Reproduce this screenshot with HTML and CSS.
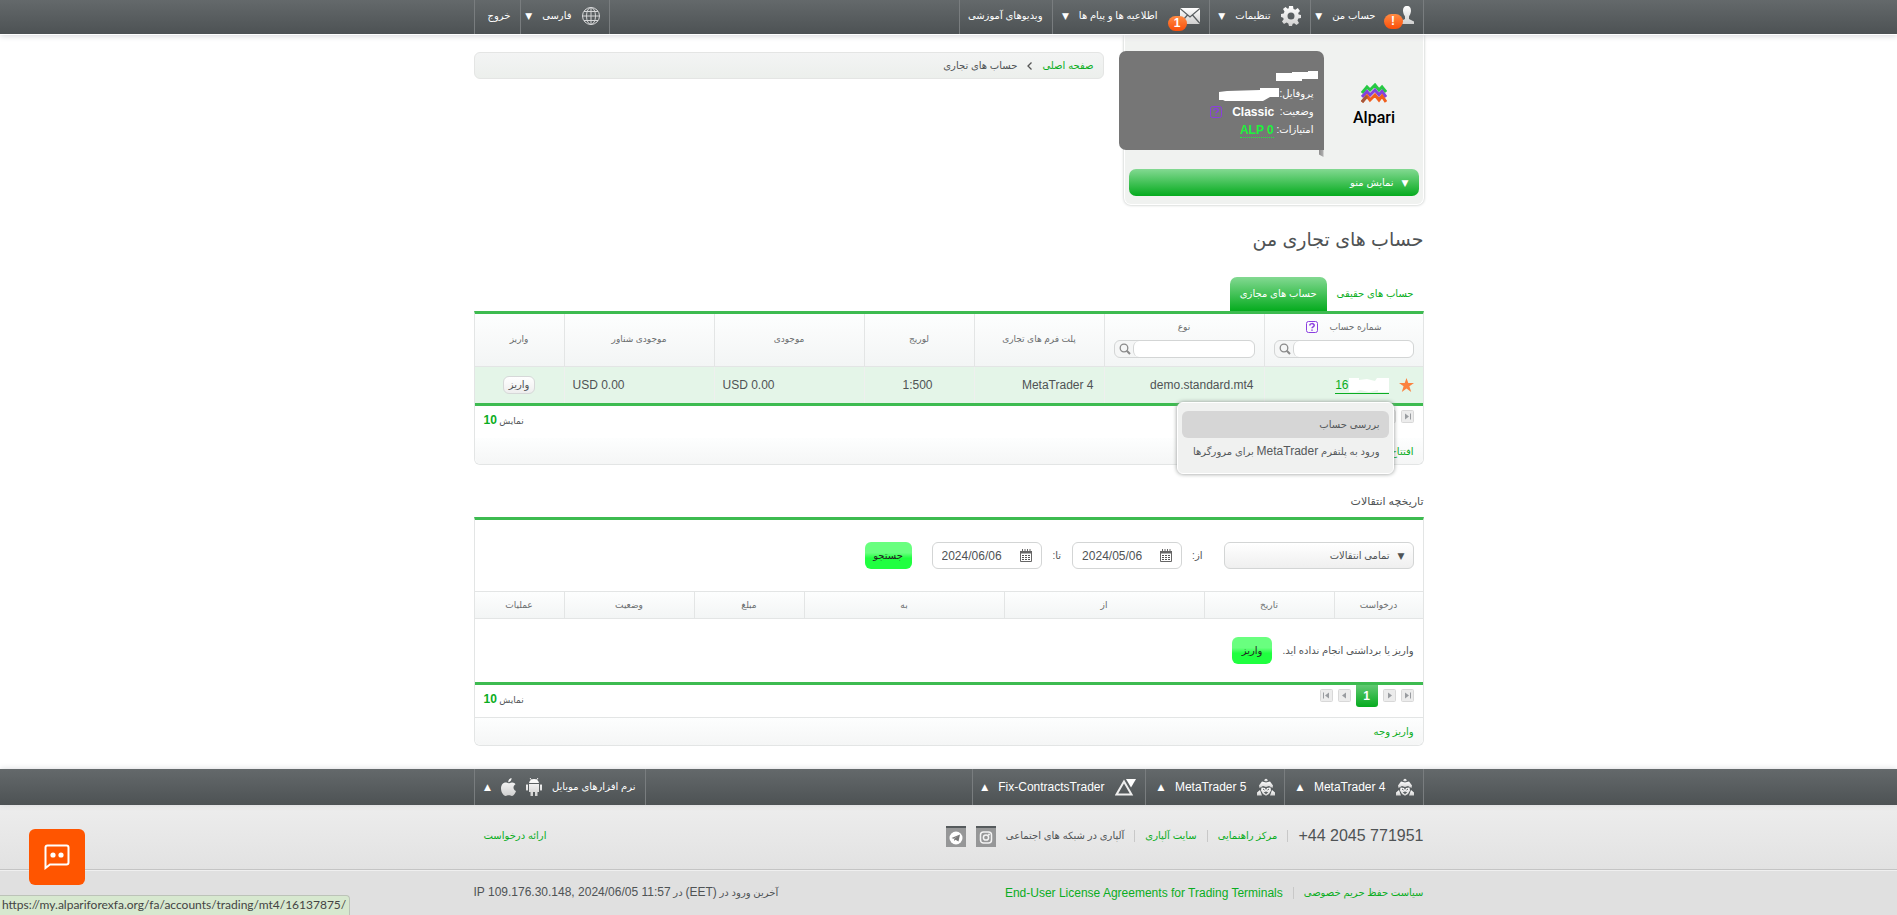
FILE: index.html
```html
<!DOCTYPE html>
<html lang="fa" dir="rtl">
<head>
<meta charset="utf-8">
<title>حساب های تجاری من</title>
<link rel="stylesheet" href="styles.css">
</head>
<body>
<svg class="defs" width="0" height="0" aria-hidden="true">
  <defs>
    <linearGradient id="silver" x1="0" y1="0" x2="0" y2="1"><stop offset="0" stop-color="#fff"/><stop offset="1" stop-color="#cfcfcf"/></linearGradient>
    <symbol id="help" viewBox="0 0 12 12"><rect x=".5" y=".5" width="11" height="11" rx="2" fill="none" stroke="#8a3ee0"/><path d="M3.8 4.6C3.8 2 8.2 2 8.2 4.4 8.2 5.8 6 5.8 6 7.2M6 8.4V9.8" fill="none" stroke="#8a3ee0" stroke-width="1.5"/></symbol>
    <symbol id="lens" viewBox="0 0 12 12"><circle cx="5" cy="5" r="3.8" fill="none" stroke="#8a8a8a" stroke-width="1.3"/><path d="M7.8 7.8 11 11" stroke="#8a8a8a" stroke-width="2"/></symbol>
    <symbol id="calendar" viewBox="0 0 12 13"><path d="M.5 3.500H11.500V12.500H.5z" fill="#fff" stroke="#666"/><path d="M0 2h12v2.500H0z" fill="#666"/><path d="M2.500 0v3M5 0v3M7.500 0v3M10 0v3" stroke="#666"/><path d="M2 6h2v1H2zM5 6h2v1H5zM8 6h2v1H8zM2 8h2v1H2zM5 8h2v1H5zM8 8h2v1H8zM2 10h2v1H2zM5 10h2v1H5zM8 10h2v1H8z" fill="#555"/></symbol>
    <symbol id="mt" viewBox="0 0 18 18"><g fill="url(#silver)"><path d="M7 2.500Q9-1 11 2.500L9 3.500z"/><path d="M5 3.500 9 4.500 13 3.500 16 7.500 15.500 10 12 8 9 9 6 8 2.500 10 2 7.500z"/><path d="M4.500 9.500 8 10 9 12 10 10 13.500 9.500 14 12.500 12 16 9 17.800 6 16 4 12.500z"/><path d="M3 12 0 14.500V17.500H5zM15 12 18 14.500V17.500H13z"/></g><path d="M6 11 7.500 12M12 11 10.500 12M7.500 14.500 9 14 10.500 14.500 9 15.500z" stroke="#5a5f61" fill="#5a5f61"/></symbol>
    <symbol id="pg-end" viewBox="0 0 13 13"><rect x=".5" y=".5" width="12" height="12" rx="1" fill="#ececec" stroke="#d8d8d8"/><path d="M4 3.500 8 6.500 4 9.500z" fill="#999ca0"/><path d="M9.500 3.500v6" stroke="#999ca0"/></symbol>
    <symbol id="pg-step" viewBox="0 0 13 13"><rect x=".5" y=".5" width="12" height="12" rx="1" fill="#ececec" stroke="#d8d8d8"/><path d="M5 3.500 9 6.500 5 9.500z" fill="#999ca0"/></symbol>
  </defs>
</svg>

<header class="bar">
  <nav class="wrap bar-row">
    <ul class="menu">
      <li class="w-113"><span class="icon-badge"><svg width="14" height="19" viewBox="0 0 14 19"><path d="M7 0C10 0 11 2 11 5 10.700 7.500 10 9 9 10.500V13L14 15.500V18H0V15.500L5 13V10.500C4 9 3.300 7.500 3 5 3 2 4 0 7 0z" fill="url(#silver)"/></svg><b class="count">!</b></span><a href="#">حساب من</a><i>▼</i></li>
      <li class="w-101"><svg width="20" height="20" viewBox="0 0 20 20"><g fill="url(#silver)"><path fill-rule="evenodd" d="M8 0h4l.5 3 1.800.8L16.800 2 19 5l-1.800 2 .4 1.500 2.400.5v3l-2.700.6-.8 1.900L18 17l-2.500 2-2.300-1.700-1.500.5L11 20H8l-.7-2.600-1.700-.8L3 18 1 15.500l1.700-2.300-.5-1.500L0 11V8l2.700-.6.8-1.800L2 3l2.500-2 2.200 1.700 1.100-.4zM10 6.500a3.500 3.500 0 1 0 0 7 3.500 3.500 0 0 0 0-7z"/></g></svg><a href="#">تنظیمات</a><i>▼</i></li>
      <li class="w-157"><span class="icon-badge"><svg width="20" height="16" viewBox="0 0 20 16"><path d="M0 0h20v16H0z" fill="url(#silver)"/><path d="M0 .5 10 9 20 .5M0 15.500 7.500 7M20 15.500 12.500 7" fill="none" stroke="#5a5f61" stroke-width="1.300"/></svg><b class="count">1</b></span><a href="#">اطلاعیه ها و پیام ها</a><i>▼</i></li>
      <li class="w-93"><a href="#">ویدیوهای آموزشی</a></li>
    </ul>
    <ul class="menu">
      <li class="w-89"><svg width="18" height="18" viewBox="0 0 18 18"><g fill="none" stroke="#d5d6d7"><circle cx="9" cy="9" r="8.500"/><ellipse cx="9" cy="9" rx="4.500" ry="8.500"/><path d="M9 0v18M0 9h18M2 4.500h14M2 13.500h14"/></g></svg><a href="#">فارسی</a><i>▼</i></li>
      <li class="w-46"><a href="#">خروج</a></li>
    </ul>
  </nav>
</header>

<main class="wrap">
  <div class="top">
    <aside class="side">
      <div class="side-head">
        <a class="logo" href="#"><svg width="26" height="22" viewBox="0 0 26 22"><g fill="none" stroke-width="3"><path d="M1 10 6 4 9 7 14 2 18 7 21 4 25 9" stroke="#26c943"/><path d="M1 14 6 8.500 9 12 14 7 18 12 21 8.500 25 14" stroke="#8343dc"/><path d="M1 19 6 13 9 17 14 12 18 17 21 13 25 19" stroke="#f05f1d"/><path d="M1 19 6 13" stroke="#a3583d"/></g></svg><span>Alpari</span></a>
        <div class="profile">
          <svg class="name-mask" width="42" height="10" viewBox="0 0 42 10"><path d="M0 2H16V1H32V0H42V8H26V10H0z" fill="#fff"/></svg>
          <div class="prow">پروفایل:<svg width="60" height="13" viewBox="0 0 60 13"><path d="M0 4 8 3 41 2V0H60V9H51L44 13H6L4 12H0z" fill="#fff"/></svg></div>
          <div class="prow">وضعیت:  <b class="status">Classic</b><svg class="phelp" width="12" height="12"><use href="#help"/></svg></div>
          <div class="prow">امتیازات: <a class="points" href="#" dir="ltr">ALP 0</a></div>
          <span class="tail"></span>
        </div>
      </div>
      <button class="menu-toggle" type="button"><i>▼</i><span>نمایش منو</span></button>
    </aside>
    <nav class="crumbs"><a href="#">صفحه اصلی</a><svg width="5" height="8" viewBox="0 0 5 8"><path d="M.5.5 4 4 .5 7.500" fill="none" stroke="#555" stroke-width="1.300"/></svg><span>حساب های تجاری</span></nav>
  </div>

  <h1>حساب های تجاری من</h1>
  <div class="tabs"><a href="#">حساب های حقیقی</a><a class="active" href="#">حساب های مجازی</a></div>

  <section class="card">
    <table class="grid accounts">
      <colgroup><col class="c159"><col class="c160"><col class="c130"><col class="c110"><col class="c150"><col class="c150"><col></colgroup>
      <thead><tr>
        <th><label class="th-label" for="f-acc">شماره حساب <svg width="12" height="12"><use href="#help"/></svg></label><span class="search"><input id="f-acc" type="text"><svg width="12" height="12"><use href="#lens"/></svg></span></th>
        <th><label class="th-label" for="f-type">نوع</label><span class="search"><input id="f-type" type="text"><svg width="12" height="12"><use href="#lens"/></svg></span></th>
        <th>پلت فرم های تجاری</th><th>لوریج</th><th>موجودی</th><th>موجودی شناور</th><th>واریز</th>
      </tr></thead>
      <tbody><tr>
        <td><div class="acc"><svg width="15" height="14" viewBox="0 0 15 14"><path d="M7.500 0 9.300 5H15L10.400 8.300 12.200 14 7.500 10.500 2.800 14 4.600 8.300 0 5H5.700z" fill="#fb8240"/></svg><a href="#" dir="ltr">16<svg width="40" height="14" viewBox="0 0 40 14"><path d="M0 0H10V2L18 1 26 3 28 0H40V14H29V12L20 14 11 12 7 14H0z" fill="#fff"/></svg></a></div>
          <div class="popup"><a class="on" href="#">بررسی حساب</a><a href="#">ورود به پلتفرم <bdi>MetaTrader</bdi> برای مرورگرها</a></div></td>
        <td dir="ltr" class="r">demo.standard.mt4</td><td dir="ltr" class="r">MetaTrader 4</td><td dir="ltr" class="r lev">1:500</td><td dir="ltr">USD 0.00</td><td dir="ltr">USD 0.00</td><td class="mid"><button class="mini" type="button">واریز</button></td>
      </tr></tbody>
    </table>
    <div class="pager">
      <div class="pages"><button type="button" aria-label="آخر"><svg width="13" height="13"><use href="#pg-end"/></svg></button><button type="button" aria-label="بعد"><svg width="13" height="13"><use href="#pg-step"/></svg></button></div>
      <span>نمایش <b>10</b></span>
    </div>
    <div class="card-foot plain"><a href="#">افتتاح</a></div>
  </section>

  <h2>تاریخچه انتقالات</h2>
  <section class="card">
    <form class="filter">
      <span class="select"><i>▼</i><select aria-label="انتقالات"><option>تمامی انتقالات</option></select></span>
      <label class="from" for="d1">از:</label>
      <span class="date"><svg width="12" height="13"><use href="#calendar"/></svg><input id="d1" type="text" dir="ltr" value="2024/05/06"></span>
      <label class="to" for="d2">تا:</label>
      <span class="date"><svg width="12" height="13"><use href="#calendar"/></svg><input id="d2" type="text" dir="ltr" value="2024/06/06"></span>
      <button class="btn find" type="button">جستجو</button>
    </form>
    <table class="grid history">
      <colgroup><col class="c89"><col class="c130"><col class="c200"><col class="c200"><col class="c110"><col class="c130"><col></colgroup>
      <thead><tr><th>درخواست</th><th>تاریخ</th><th>از</th><th>به</th><th>مبلغ</th><th>وضعیت</th><th>عملیات</th></tr></thead>
      <tbody><tr><td colspan="7"><div class="empty"><span>واریز یا برداشتی انجام نداده اید.</span><button class="btn" type="button">واریز</button></div></td></tr></tbody>
    </table>
    <div class="pager">
      <div class="pages"><button type="button" aria-label="آخر"><svg width="13" height="13"><use href="#pg-end"/></svg></button><button type="button" aria-label="بعد"><svg width="13" height="13"><use href="#pg-step"/></svg></button><b class="cur">1</b><button class="flip" type="button" aria-label="قبل"><svg width="13" height="13"><use href="#pg-step"/></svg></button><button class="flip" type="button" aria-label="اول"><svg width="13" height="13"><use href="#pg-end"/></svg></button></div>
      <span>نمایش <b>10</b></span>
    </div>
    <div class="card-foot"><a href="#">واریز وجه</a></div>
  </section>
</main>

<footer>
  <div class="bar low">
    <nav class="wrap bar-row">
      <ul class="menu">
        <li class="w-139"><svg width="18" height="18"><use href="#mt"/></svg><a href="#" dir="ltr">MetaTrader 4</a><i>▲</i></li>
        <li class="w-139"><svg width="18" height="18"><use href="#mt"/></svg><a href="#" dir="ltr">MetaTrader 5</a><i>▲</i></li>
        <li class="w-173"><svg width="21" height="17" viewBox="0 0 21 17"><path d="M9 2.500 16.500 15.500H1.500z" fill="none" stroke="#eee" stroke-width="2"/><path d="M11 0H21L16 8.500z" fill="#fff"/></svg><a href="#" dir="ltr">Fix-ContractsTrader</a><i>▲</i></li>
      </ul>
      <ul class="menu">
        <li class="w-171"><a class="mobile" href="#">نرم افزارهای موبایل</a><svg width="16" height="18" viewBox="0 0 16 18"><g fill="url(#silver)"><path d="M3 5C3.500 2.500 5.500 1 8 1S12.500 2.500 13 5zM3 6H13V14H11.500V18H9V14H7V18H4.500V14H3zM0 7Q1 5.500 2 7V12Q1 13.500 0 12zM14 7Q15 5.500 16 7V12Q15 13.500 14 12z"/></g><path d="M4 0 5.500 2M12 0 10.500 2" stroke="#eee"/></svg><svg width="15" height="18" viewBox="0 0 15 18"><path d="M10.500 0C10.800 2 9.300 4.200 7.300 4.200 7 2.300 8.700.3 10.500 0zM7.500 5.200C8.500 5.200 9.500 4.300 11.200 4.400 12.800 4.500 13.800 5.200 14.500 6.200 11.500 8 12 11.800 15 13 14.300 15.300 12.700 18 11 18 9.700 18 9.200 17.300 7.800 17.300 6.300 17.300 5.800 18 4.600 18 2.500 18 0 14 0 10.500 0 6.500 2.500 4.500 4.500 4.500 5.800 4.500 6.700 5.200 7.500 5.200z" fill="url(#silver)"/></svg><i>▲</i></li>
      </ul>
    </nav>
  </div>
  <div class="links">
    <div class="wrap links-row">
      <span class="phone" dir="ltr">+44 2045 771951</span><a class="sep" href="#">مرکز راهنمایی</a><a class="sep" href="#">سایت آلپاری</a><span class="sep">آلپاری در شبکه های اجتماعی</span>
      <a class="soc" href="#" aria-label="Instagram"><svg width="20" height="21" viewBox="0 0 20 21"><path d="M0 0H20V21H0z" fill="#969798"/><path d="M0 0H20V2H0z" fill="#555a5c"/><g fill="none" stroke="#f4f4f4" stroke-width="1.500"><rect x="4.500" y="6" width="11" height="11" rx="3"/><circle cx="10" cy="11.500" r="2.600"/></g><circle cx="13" cy="8.500" r=".9" fill="#fff"/></svg></a>
      <a class="soc" href="#" aria-label="Telegram"><svg width="20" height="21" viewBox="0 0 20 21"><path d="M0 0H20V21H0z" fill="#969798"/><path d="M0 0H20V2H0z" fill="#555a5c"/><circle cx="10" cy="12" r="6.500" fill="#fff"/><path d="M5.500 12 14 8.500 12.500 15.500 9.500 13.800 8.200 15V12.800L12.500 9.800 7.500 12.700z" fill="#777"/></svg></a>
      <a class="req" href="#">ارائه درخواست</a>
    </div>
  </div>
  <div class="legal">
    <div class="wrap legal-row">
      <a href="#">سیاست حفظ حریم خصوصی</a><a class="sep eula" href="#" dir="ltr">End-User License Agreements for Trading Terminals</a>
      <span class="ip">آخرین ورود در <bdi>(EET)</bdi> در <bdi dir="ltr">IP 109.176.30.148, 2024/06/05 11:57</bdi></span>
    </div>
  </div>
</footer>

<button class="chat" type="button" aria-label="گفتگو"><svg width="26" height="26" viewBox="0 0 26 26"><path d="M3.500 1.500H22.500Q24.500 1.500 24.500 3.500V18.500Q24.500 20.500 22.500 20.500H6L1.500 24V3.500Q1.500 1.500 3.500 1.500z" fill="none" stroke="#fff" stroke-width="2"/><circle cx="9" cy="11" r="2.600" fill="#fff"/><circle cx="17" cy="11" r="2.600" fill="#fff"/></svg></button>
<div class="status-url" dir="ltr">https://my.alpariforexfa.org/fa/accounts/trading/mt4/16137875/</div>
</body>
</html>
```
FILE: styles.css
```css
* { box-sizing: border-box; }
body {
  margin: 0;
  min-height: 100vh;
  display: flex;
  flex-direction: column;
  background: #fff;
  color: #4f5355;
  font: 10px/16px "Liberation Sans", "DejaVu Sans", sans-serif;
}
a { color: #0aad22; text-decoration: none; }
button, input, select { font: inherit; color: inherit; }
button { cursor: pointer; }
bdi { font-size: 12px; }
svg { display: block; flex: none; }
.defs { position: absolute; }
i { font-style: normal; font-family: "DejaVu Sans", sans-serif; font-size: 9px; }
.wrap { width: 100%; max-width: 950px; margin: 0 auto; }

.bar {
  background: linear-gradient(#64696b, #4d5254);
  color: #fff;
  box-shadow: 0 1px 0 #fff, 0 2px 6px #d5d7da;
  position: relative;
}
.bar-row { display: flex; justify-content: space-between; }
.menu { display: flex; margin: 0; padding: 0; list-style: none; border-right: 1px solid #797d7f; }
.menu li {
  display: flex;
  align-items: center;
  gap: 10px;
  height: 34px;
  padding: 0 9px 3px 12px;
  border-left: 1px solid #797d7f;
  white-space: nowrap;
}
.menu a { color: #fff; }
.menu i { margin-right: auto; }
.w-113 { width: 113px; }
.w-101 { width: 101px; }
.w-157 { width: 157px; }
.w-93 { width: 93px; }
.w-89 { width: 89px; }
.w-46 { width: 46px; }
.w-139 { width: 139px; }
.w-173 { width: 173px; }
.w-171 { width: 171px; }
.icon-badge { position: relative; margin-left: 12px; }
.count {
  position: absolute;
  top: 8px;
  left: -12px;
  width: 19px;
  height: 15px;
  border-radius: 8px;
  background: linear-gradient(#ff8b43, #fb4e09);
  text-align: center;
  font-size: 12px;
  line-height: 15px;
}
.w-113 .icon-badge { margin-left: 14px; }
.w-113 .count { left: -16px; }

.top { display: flex; align-items: flex-start; justify-content: space-between; }
.side {
  width: 300px;
  padding: 17px 4px 8px;
  border: 1px solid #fff;
  border-top: 0;
  border-radius: 0 0 7px 7px;
  background: #f0f2f0;
  box-shadow: 0 0 3px #b5bab8;
}
.side-head { display: flex; margin-left: -10px; }
.logo { flex: 1; display: flex; flex-direction: column; align-items: center; padding: 32px 0 0 6px; color: #000; font: 500 16px/20px Roboto, sans-serif; gap: 3px; }
.profile {
  position: relative;
  width: 205px;
  height: 99px;
  padding: 20px 10px 0;
  border-radius: 7px 7px 0 7px;
  background: #767676;
  color: #fff;
}
.name-mask { margin-right: -4px; }
.prow { display: flex; align-items: center; height: 18px; white-space: pre; }
.prow:nth-child(2) { margin-top: 4px; }
.status { font-size: 12px; }
.phelp { margin-right: 10px; }
.points { color: #1df33c; font-size: 12px; font-weight: bold; line-height: 14px; border-bottom: 1px dotted #1df33c; }
.tail { position: absolute; right: 0; top: 99px; width: 5px; height: 7px; background: linear-gradient(to left, #b5b5b5, #8d8d8d); clip-path: polygon(0 0, 100% 0, 100% 100%, 0 60%); }
.menu-toggle {
  display: flex;
  align-items: center;
  gap: 8px;
  width: 100%;
  height: 27px;
  margin-top: 19px;
  padding: 0 10px;
  border: 0;
  border-radius: 7px;
  background: linear-gradient(#83d992, #05ab1e);
  color: #fff;
}
.crumbs {
  display: flex;
  align-items: center;
  gap: 10px;
  width: 630px;
  height: 27px;
  margin-top: 18px;
  padding: 0 9px;
  border: 1px solid #e4e5e4;
  border-radius: 6px;
  background: linear-gradient(#f3f4f4, #ecefec);
}
.crumbs svg { transform: scaleX(-1); }

h1 { margin: 21px 0 0; font-size: 19px; font-weight: normal; line-height: 28px; }
h2 { margin: 22px 0 2px; font-size: 11px; font-weight: normal; line-height: 28px; }
.tabs { display: flex; margin-top: 23px; }
.tabs a { height: 34px; padding: 0 10px; line-height: 34px; white-space: nowrap; }
.tabs .active { background: linear-gradient(#83d992, #05ab1e); border-radius: 7px 7px 0 0; color: #fff; }

.card { border: 1px solid #e3e5e5; border-top: 3px solid #3dbb50; border-radius: 0 0 6px 6px; }
.grid { width: 100%; border-collapse: separate; border-spacing: 0; table-layout: fixed; border-bottom: 3px solid #3dbb50; }
.c89 { width: 89px; }
.c110 { width: 110px; }
.c130 { width: 130px; }
.c150 { width: 150px; }
.c159 { width: 159px; }
.c160 { width: 160px; }
.c200 { width: 200px; }
th {
  padding: 0 9px;
  background: linear-gradient(#fdfefe, #f3f5f5);
  border-bottom: 1px solid #e3e5e5;
  border-left: 1px solid #e3e5e5;
  font-size: 9px;
  font-weight: normal;
  color: #6a6d6e;
}
th:last-child { border-left: 0; }
.accounts th { height: 53px; padding-bottom: 3px; }
.history th { height: 28px; border-top: 1px solid #e3e5e5; }
.accounts td { position: relative; height: 36px; padding: 0 9px; background: #e4f5e8; border-left: 1px solid #eef0ee; font-size: 12px; white-space: nowrap; text-align: left; }
.accounts td:last-child { border-left: 0; }
.accounts td.r { text-align: right; }
.accounts td.lev { padding-right: 40px; }
.accounts td.mid { text-align: center; }
.th-label { display: flex; justify-content: center; align-items: center; gap: 12px; height: 16px; }
.search { display: flex; align-items: center; margin-top: 5px; height: 18px; border: 1px solid #d3d5d5; border-radius: 6px; background: #f5f6f6; padding-left: 4px; gap: 2px; }
.search input { flex: 1; min-width: 0; height: 16px; border: 0; border-left: 1px solid #d3d5d5; border-radius: 6px; background: #fff; padding: 0 6px; }
.acc { display: flex; align-items: center; gap: 10px; }
.acc a { display: flex; align-items: center; height: 17px; border-bottom: 1px solid #0aad22; }
.popup {
  position: absolute;
  z-index: 2;
  top: 35px;
  right: 29px;
  width: 217px;
  height: 72px;
  padding: 8px 4px;
  border: 1px solid #fff;
  border-radius: 6px;
  background: #f0f1f0;
  box-shadow: 0 0 4px #8f9391;
}
.popup a { display: block; height: 27px; padding: 0 9px; border-radius: 6px; line-height: 27px; color: #55595b; font-size: 10px; text-align: right; }
.popup .on { background: #d6d6d6; }
.mini { height: 18px; padding: 0 5px; border: 1px solid #d6d8d8; border-radius: 6px; background: linear-gradient(#fff, #eee); font-size: 10px; line-height: 14px; }
.pager { display: flex; justify-content: space-between; height: 32px; padding: 0 9px; line-height: 29px; font-size: 9px; }
.pager b { color: #0aad22; font-size: 12px; }
.pages { display: flex; gap: 5px; }
.pages button { display: block; height: 13px; margin-top: 4px; padding: 0; border: 0; background: none; }
.pages .flip { transform: scaleX(-1); }
.pages .cur { width: 22px; height: 22px; border-radius: 0 0 3px 3px; background: linear-gradient(#62c873, #05ab1e); color: #fff; line-height: 22px; text-align: center; }
.card-foot { height: 28px; padding: 0 9px; border-top: 1px solid #e3e5e5; border-radius: 0 0 6px 6px; background: linear-gradient(#fdfefe, #f5f6f6); line-height: 27px; }
.card-foot.plain { height: 26px; border-top: 0; }

.filter { display: flex; align-items: center; height: 71px; padding: 0 9px; }
.select { display: flex; align-items: center; width: 190px; height: 27px; padding: 0 8px; border: 1px solid #d3d5d5; border-radius: 6px; background: linear-gradient(#fff, #efefef); }
.select select { flex: 1; border: 0; background: none; appearance: none; padding: 0 8px; outline: 0; }
.from { margin: 0 21px 0 10px; }
.to { margin: 0 11px; }
.date { display: flex; align-items: center; justify-content: space-between; width: 110px; height: 27px; padding: 0 9px; border: 1px solid #d3d5d5; border-radius: 6px; }
.date input { width: 66px; padding: 0; border: 0; background: none; font-size: 12px; }
.btn { height: 27px; padding: 0 10px; border: 0; border-radius: 6px; background: linear-gradient(#69ff7f 40%, #20ff40 60%); color: #222; }
.find { margin-right: 20px; width: 47px; padding: 0; }
.history td { padding: 0 9px; height: 63px; }
.empty { display: flex; align-items: center; gap: 10px; }

footer { flex: 1; display: flex; flex-direction: column; margin-top: 23px; }
.low { box-shadow: 0 0 6px #d5d7da; }
.low li { height: 36px; gap: 10px; padding-bottom: 0; }
.low a { font-size: 12px; }
.low .mobile { font-size: 10px; }
.links { height: 65px; background: linear-gradient(#ededed, #e2e2e2); border-bottom: 1px solid #c4c4c4; }
.links-row, .legal-row { display: flex; align-items: center; white-space: nowrap; }
.links-row { height: 62px; }
.phone { font-size: 16px; }
.sep { margin-right: 10px; padding-right: 10px; border-right: 1px solid #c8c8c8; line-height: 12px; }
.soc { margin-right: 10px; }
.req, .ip { margin-right: auto; }
.req { padding-left: 10px; }
.legal { flex: 1; background: #e0e0e0; border-top: 1px solid #efefef; }
.legal-row { height: 43px; }
.eula { font-size: 12px; }

.chat { position: fixed; left: 29px; bottom: 30px; display: grid; place-items: center; width: 56px; height: 56px; padding: 0; border: 0; border-radius: 6px; background: #ff5500; }
.status-url { position: fixed; left: 0; bottom: 0; width: 350px; height: 20px; padding-left: 2px; border: 1px solid #bcc3b8; border-width: 1px 1px 0 0; border-radius: 0 4px 0 0; background: #d7e8cf; color: #444; font: 12px/18px Lato, sans-serif; white-space: nowrap; }
```
